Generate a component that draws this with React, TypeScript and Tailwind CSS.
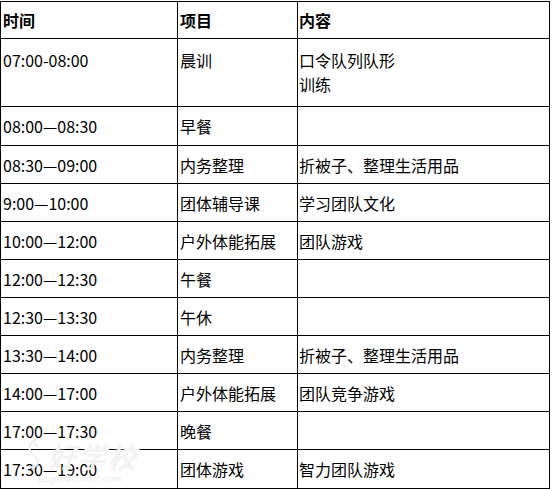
const rows: { time: string; item: string; content: string[]; h: string }[] = [
  { time: "07:00-08:00", item: "晨训", content: ["口令队列队形", "训练"], h: "h-[68px]" },
  { time: "08:00—08:30", item: "早餐", content: [], h: "h-[39px]" },
  { time: "08:30—09:00", item: "内务整理", content: ["折被子、整理生活用品"], h: "h-[38px]" },
  { time: "9:00—10:00", item: "团体辅导课", content: ["学习团队文化"], h: "h-[38px]" },
  { time: "10:00—12:00", item: "户外体能拓展", content: ["团队游戏"], h: "h-[38px]" },
  { time: "12:00—12:30", item: "午餐", content: [], h: "h-[38px]" },
  { time: "12:30—13:30", item: "午休", content: [], h: "h-[38px]" },
  { time: "13:30—14:00", item: "内务整理", content: ["折被子、整理生活用品"], h: "h-[38px]" },
  { time: "14:00—17:00", item: "户外体能拓展", content: ["团队竞争游戏"], h: "h-[38px]" },
  { time: "17:00—17:30", item: "晚餐", content: [], h: "h-[38px]" },
  { time: "17:30—19:00", item: "团体游戏", content: ["智力团队游戏"], h: "h-[39px]" },
];

const font = { fontFamily: '"Noto Sans CJK SC", "Liberation Sans", sans-serif' };

export default function App() {
  return (
    <div className="relative h-[489px] w-[552px] bg-white pt-px text-[16px] text-black" style={font}>
      <div className="w-[550px] border-r border-b border-black">
        {/* header */}
        <div className="grid h-[37px] grid-cols-[177px_120px_252px] font-bold">
          <div className="flex items-center border-t border-l border-black pl-[2px]">时间</div>
          <div className="flex items-center border-t border-l border-black pl-[2px]">项目</div>
          <div className="flex items-center border-t border-l border-black pl-[1px]">内容</div>
        </div>
        {rows.map((r, i) => {
          const first = i === 0;
          const cell = first
            ? "flex flex-col items-start justify-start border-t border-l border-black pt-[9px] leading-6"
            : "flex flex-col items-start justify-center border-t border-l border-black leading-6";
          return (
            <div key={i} className={`grid grid-cols-[177px_120px_252px] ${r.h}`}>
              <div className={`${cell} pl-[2px]`}>{r.time}</div>
              <div className={`${cell} pl-[2px]`}>{r.item}</div>
              <div className={`${cell} pl-[1px]`}>
                {r.content.map((c, j) => (
                  <span key={j}>{c}</span>
                ))}
              </div>
            </div>
          );
        })}
      </div>

      {/* faint watermark */}
      <div className="pointer-events-none absolute left-[24px] top-[436px] flex items-end gap-[4px] text-[#f3f3f3]">
        <svg width="20" height="34" viewBox="0 0 20 34" fill="none" stroke="#efefef" strokeWidth="2">
          <path d="M14 3c-6 1-10 6-8 12 2 5 8 6 8 11 0 4-5 6-9 5" />
          <path d="M9 8c3-1 5 1 4 4" />
        </svg>
        <span className="text-[28px] font-bold italic leading-none tracking-[2px]">好学校</span>
      </div>
      <div className="pointer-events-none absolute left-[38px] top-[475px] text-[9px] leading-none tracking-[0.5px] text-[#ebebeb]" style={{ fontFamily: '"Liberation Sans", sans-serif' }}>
        51goodschool.com
      </div>
    </div>
  );
}
